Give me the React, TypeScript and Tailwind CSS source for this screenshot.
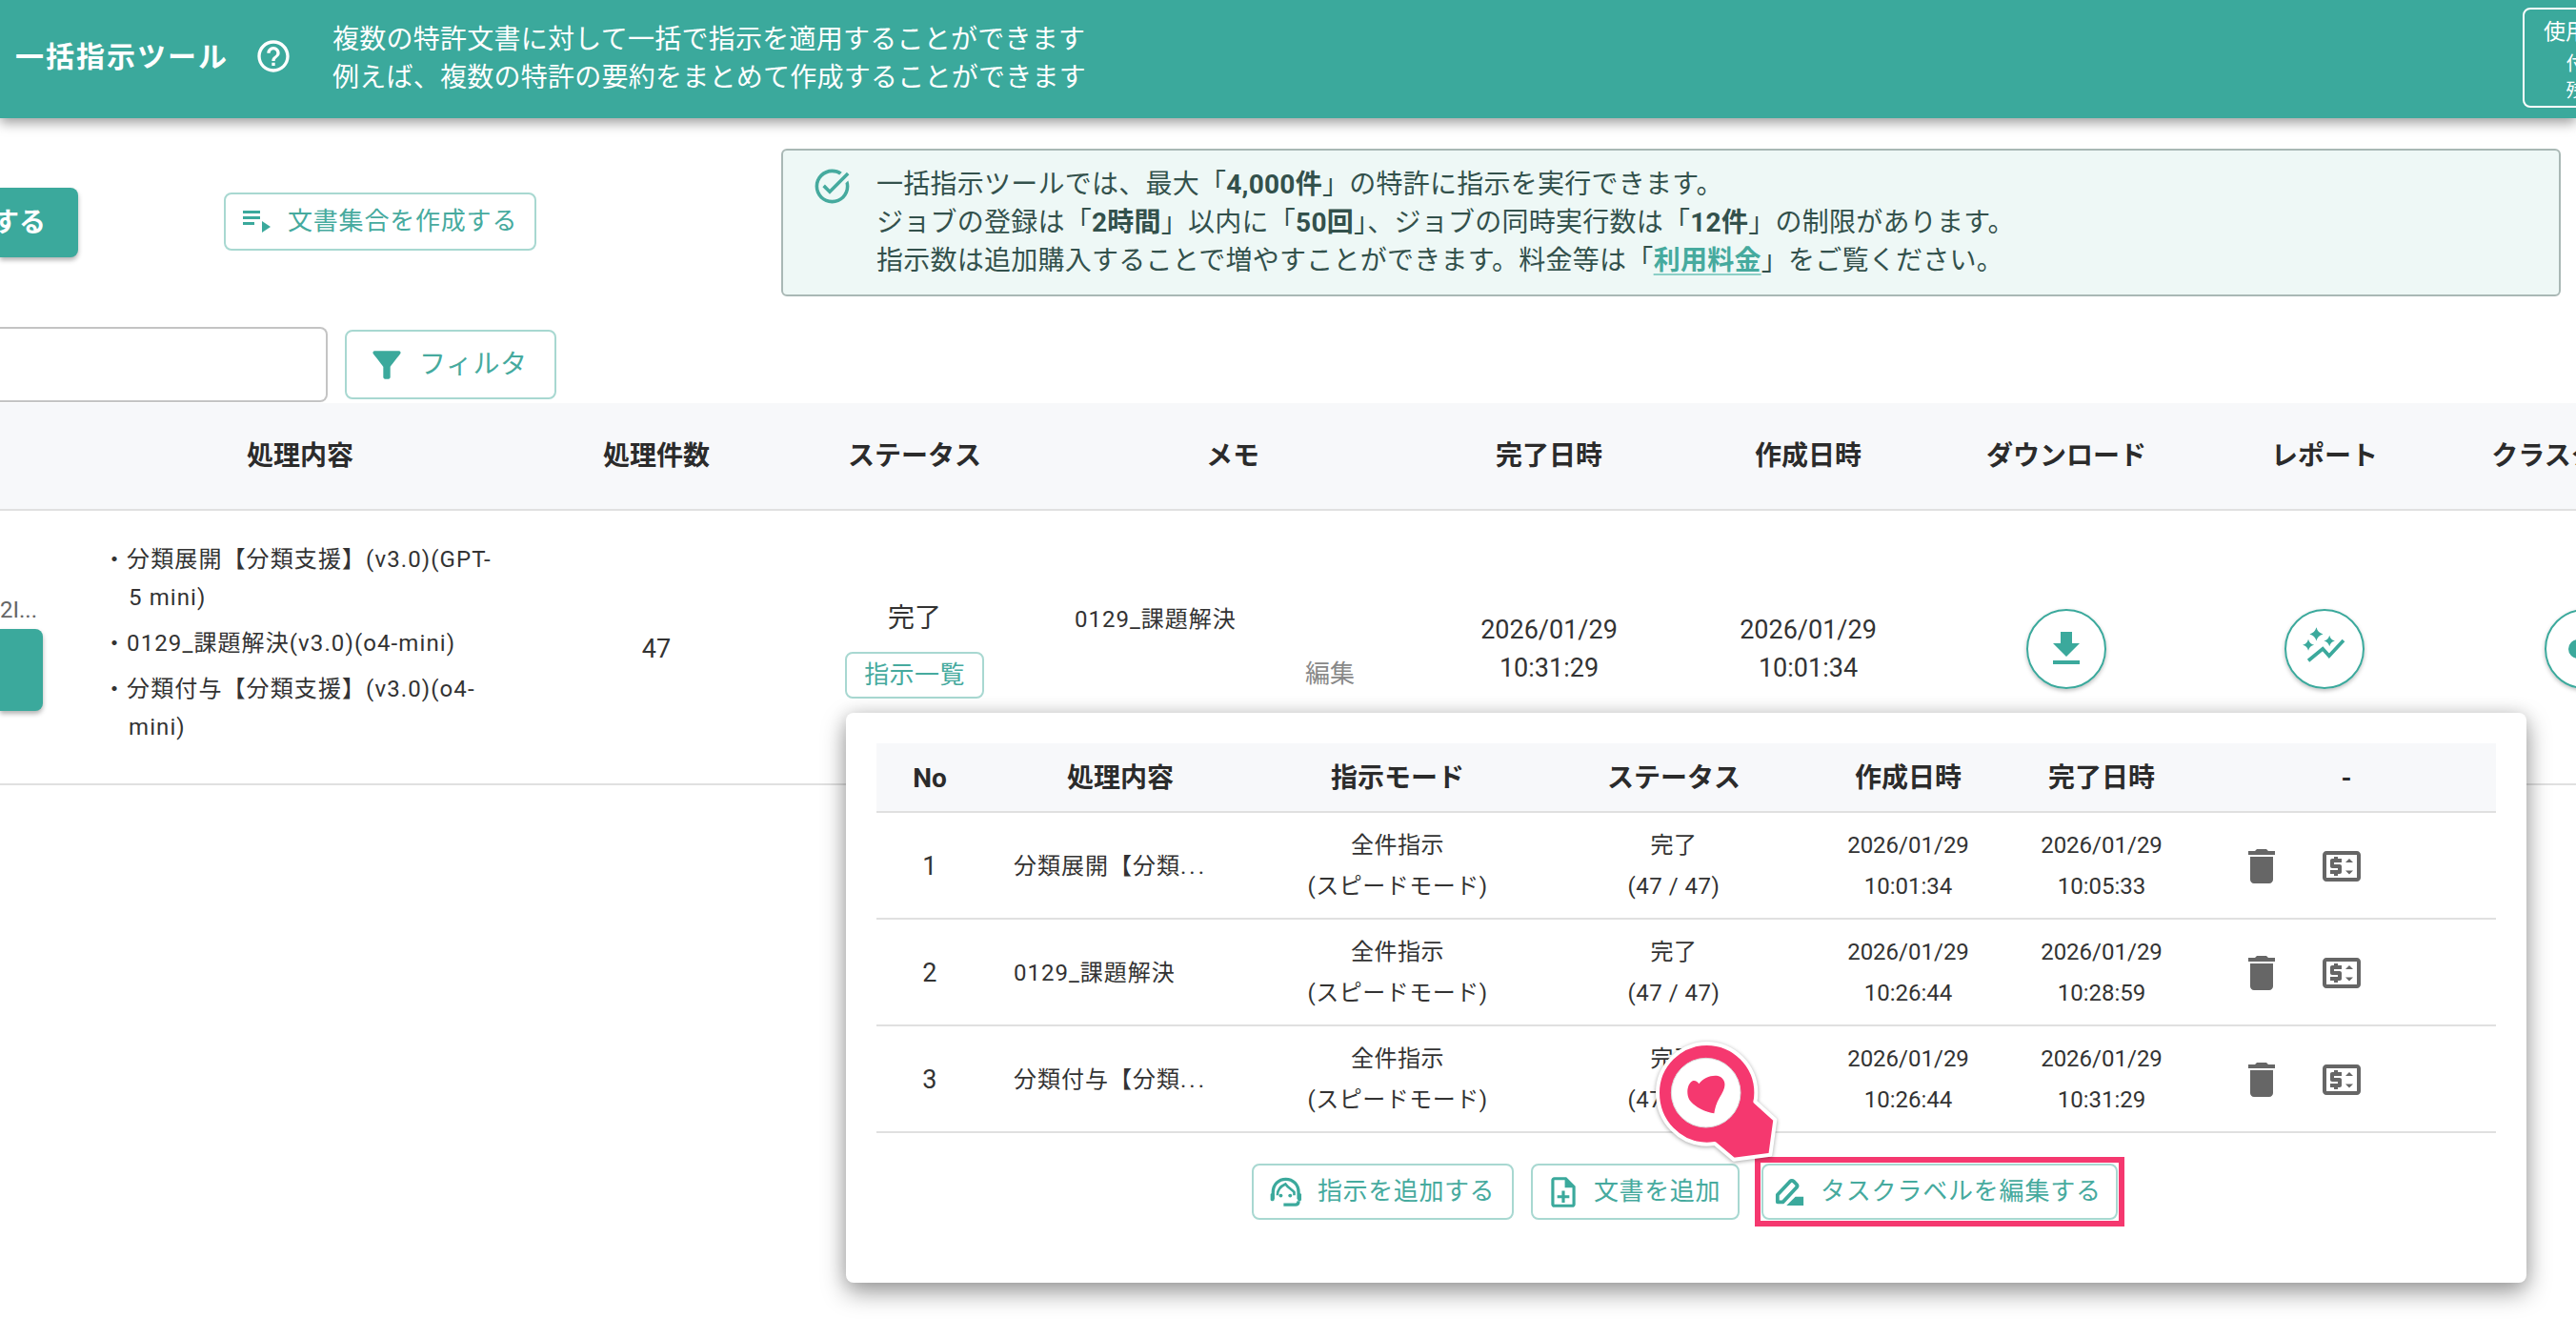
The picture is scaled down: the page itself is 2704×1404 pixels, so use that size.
import React from "react";
import { MdHelpOutline, MdFilterAlt, MdOutlineTaskAlt, MdFileDownload, MdDelete, MdOutlinePriceChange, MdOutlineNoteAdd } from "react-icons/md";

const mainCols = "grid-cols-[94px_442px_306px_236px_432px_232px_312px_230px_312px_234px]";
const subCols = "grid-cols-[112px_288px_294px_286px_206px_200px_314px]";

function PlaylistIcon() {
  return (
    <svg width="30" height="24" viewBox="0 0 30 24" className="shrink-0 text-[#3ba99c]" fill="currentColor">
      <rect x="0" y="0" width="18" height="3" />
      <rect x="0" y="6" width="18" height="3" />
      <rect x="0" y="12" width="12" height="3" />
      <polygon points="20,11 29,17 20,23" />
    </svg>
  );
}

function HeadsetIcon() {
  return (
    <svg width="34" height="34" viewBox="36 24 104 104" className="shrink-0" fill="none" stroke="#3ba99c">
      <path d="M46 98 V76 C46 52 64 34 87 34 C110 34 128 52 128 76 V98" strokeWidth="10" />
      <path d="M60 86 C60 66 72 56 86 50 C94 62 108 68 114 76 V86" strokeWidth="8" />
      <circle cx="71" cy="87" r="6" fill="#3ba99c" stroke="none" />
      <circle cx="101" cy="87" r="6" fill="#3ba99c" stroke="none" />
      <path d="M80 116 H118 Q128 116 128 104" strokeWidth="10" />
      <rect x="38" y="80" width="12" height="24" rx="4" fill="#3ba99c" stroke="none" />
      <rect x="125" y="80" width="12" height="24" rx="4" fill="#3ba99c" stroke="none" />
    </svg>
  );
}

function PenIcon() {
  return (
    <svg width="32" height="32" viewBox="0 0 34 34" className="shrink-0" fill="none" stroke="#3ba99c">
      <path d="M3 28 V20 L17 5 Q19 3 21 5 L24 8 Q26 10 24 12 L9 28 Z" strokeWidth="4" strokeLinejoin="round" />
      <polygon points="13,32 32,32 32,22 23,22" fill="#3ba99c" stroke="none" />
    </svg>
  );
}

function SparkleIcon() {
  const star = (x: number, y: number, r: number) => `M${x} ${y - r} Q${x + r * 0.2} ${y - r * 0.2} ${x + r} ${y} Q${x + r * 0.2} ${y + r * 0.2} ${x} ${y + r} Q${x - r * 0.2} ${y + r * 0.2} ${x - r} ${y} Q${x - r * 0.2} ${y - r * 0.2} ${x} ${y - r}Z`;
  return (
    <svg width="47" height="47" viewBox="57 85 140 140" fill="#3ba99c">
      <path d={star(100, 110, 21)} />
      <path d={star(141, 131, 17)} />
      <path d={star(75, 144, 18)} />
      <path d="M75 193 L120 156 L140 178 L185 130" fill="none" stroke="#3ba99c" strokeWidth="11" />
    </svg>
  );
}

function Pin() {
  return (
    <svg className="absolute left-[1720px] top-[1080px] drop-shadow-[0_1px_2px_rgba(0,0,0,0.35)]" width="170" height="150" viewBox="0 0 510 450">
      <path
        d="M215 45 C300 45 370 115 370 200 C370 210 369 220 367 228 L430 285 L415 395 L300 410 L240 360 C232 361 224 362 215 362 C130 362 60 290 60 200 C60 115 130 45 215 45Z"
        fill="#f5386f"
        stroke="#ffffff"
        strokeWidth="12"
        strokeLinejoin="round"
      />
      <circle cx="212" cy="200" r="109" fill="#ffffff" stroke="#d9d9d9" strokeWidth="3" />
      <path
        d="M190 172 C205 150 240 140 258 150 C280 165 272 190 255 215 C245 232 240 250 238 265 C215 262 175 245 160 222 C148 200 155 170 170 163 C178 160 186 165 190 172Z"
        fill="#f5386f"
      />
    </svg>
  );
}

const subRows = [
  { no: "1", name: "分類展開【分類", dots: true, created: "10:01:34", done: "10:05:33" },
  { no: "2", name: "0129_課題解決", dots: false, created: "10:26:44", done: "10:28:59" },
  { no: "3", name: "分類付与【分類", dots: true, created: "10:26:44", done: "10:31:29" },
];

function Popup() {
  return (
    <div className="absolute left-[888px] top-[748px] w-[1764px] h-[598px] rounded-lg bg-white px-8 pt-8 shadow-[0_10px_26px_rgba(0,0,0,0.38),0_0_18px_rgba(0,0,0,0.12)]">
      <div className={`grid ${subCols} h-[73px] items-center border-b-2 border-[#e0e0e0] bg-[#f7f8fa] pt-[2px] text-center text-[28px] font-bold text-[#2b2b2b]`}>
        <div>No</div>
        <div>処理内容</div>
        <div>指示モード</div>
        <div>ステータス</div>
        <div>作成日時</div>
        <div>完了日時</div>
        <div>-</div>
      </div>
      {subRows.map((r) => (
        <div key={r.no} className={`grid ${subCols} h-[112px] items-center border-b-2 border-[#e0e0e0] pt-[2px] text-center text-[24px] leading-[43px] tracking-[0.5px] text-[#333333]`}>
          <div className="text-[27px]">{r.no}</div>
          <div className="whitespace-nowrap pl-8 text-left tracking-[1px]">
            {r.name}
            {r.dots && <span className="tracking-[3px]">...</span>}
          </div>
          <div>全件指示<br />(スピードモード)</div>
          <div>完了<br />(47 / 47)</div>
          <div className="tracking-[0px]">2026/01/29<br />{r.created}</div>
          <div className="tracking-[0px]">2026/01/29<br />{r.done}</div>
          <div className="flex items-center gap-9 pl-11 text-[#666666]">
            <MdDelete size={48} />
            <MdOutlinePriceChange size={48} />
          </div>
        </div>
      ))}
      <div className="mt-8 flex items-start pl-[394px] text-[26px] tracking-[0.6px] text-[#46aa9e]">
        <div className="flex h-[59px] w-[275px] items-center gap-[16px] rounded-lg border-2 border-[#a8d8d1] pl-[17px]">
          <HeadsetIcon />
          <span>指示を追加する</span>
        </div>
        <div className="ml-[18px] flex h-[59px] w-[219px] items-center gap-[13px] rounded-lg border-2 border-[#a8d8d1] pl-[13px]">
          <MdOutlineNoteAdd size={38} className="shrink-0 text-[#3ba99c]" />
          <span>文書を追加</span>
        </div>
        <div className="relative ml-[23px] flex h-[59px] w-[374px] items-center gap-[16px] rounded-lg border-2 border-[#a8d8d1] pl-[12px] tracking-[0.8px]">
          <PenIcon />
          <span>タスクラベルを編集する</span>
          <div className="absolute -inset-x-[9px] -inset-y-[9px] border-[6px] border-[#f5386f]" />
        </div>
      </div>
    </div>
  );
}

export default function App() {
  return (
    <div className="relative h-[1404px] w-[2704px] overflow-hidden bg-white font-['Roboto','Noto_Sans_CJK_JP',sans-serif]">
      <header className="relative z-10 flex h-[124px] items-center bg-[#3ba99c] text-white shadow-[0_5px_12px_rgba(0,0,0,0.38)]">
        <h1 className="w-[267px] shrink-0 pb-[6px] pl-4 text-[30px] font-bold tracking-[2px]">一括指示ツール</h1>
        <MdHelpOutline size={40} className="mb-[6px] shrink-0" />
        <p className="ml-[42px] w-[2299px] shrink-0 text-[28px] leading-[40px] tracking-[0.25px]">
          複数の特許文書に対して一括で指示を適用することができます<br />
          例えば、複数の特許の要約をまとめて作成することができます
        </p>
        <div className="flex h-[105px] w-[136px] shrink-0 -translate-y-[2px] flex-col items-center justify-center rounded-lg border-2 border-white pt-[4px] text-[20px] leading-[28px]">
          <div className="text-[23px] leading-[38px]">使用状況</div>
          <div>付与:</div>
          <div>残り:</div>
        </div>
      </header>

      <div className="flex h-[219px] items-start pt-8">
        <div className="mt-[41px] flex h-[73px] w-[82px] shrink-0 items-center justify-end rounded-r-lg bg-[#3ba99c] pr-[34px] text-[28px] font-bold text-white shadow-[0_3px_5px_rgba(0,0,0,0.3)]">
          <span className="whitespace-nowrap">する</span>
        </div>
        <div className="ml-[153px] mt-[46px] flex h-[61px] w-[328px] shrink-0 items-center gap-[17px] rounded-lg border-2 border-[#a8d8d1] pl-[18px] text-[26px] tracking-[0.8px] text-[#46aa9e]">
          <PlaylistIcon />
          <span className="whitespace-nowrap">文書集合を作成する</span>
        </div>
        <div className="ml-[257px] flex h-[155px] w-[1868px] shrink-0 rounded-md border-2 border-[#a9b8b5] bg-[#eef8f6] pl-[30px] pt-[16px] text-[28px] leading-[40px] tracking-[0.25px] text-[#33514c]">
          <MdOutlineTaskAlt size={43} className="shrink-0 text-[#46aa9e]" />
          <div className="ml-[25px]">
            一括指示ツールでは、最大「<b>4,000件</b>」の特許に指示を実行できます。<br />
            ジョブの登録は「<b>2時間</b>」以内に「<b>50回</b>」、ジョブの同時実行数は「<b>12件</b>」の制限があります。<br />
            指示数は追加購入することで増やすことができます。料金等は「<b className="text-[#46aa9e] underline decoration-[#8ccfc6] underline-offset-4">利用料金</b>」をご覧ください。
          </div>
        </div>
      </div>

      <div className="flex h-[80px] items-start">
        <div className="h-[79px] w-[344px] shrink-0 rounded-r-lg border-2 border-l-0 border-[#c4c4c4]" />
        <div className="ml-[18px] mt-[3px] flex h-[73px] w-[222px] shrink-0 items-center gap-[12px] rounded-lg border-2 border-[#a8d8d1] pl-[20px] text-[28px] tracking-[0.5px] text-[#46aa9e]">
          <MdFilterAlt size={44} className="shrink-0 text-[#3ba99c]" />
          <span className="whitespace-nowrap">フィルタ</span>
        </div>
      </div>

      <div className={`grid w-[2830px] ${mainCols} h-[113px] items-center border-b-2 border-[#e0e0e0] bg-[#f7f8fa] text-center text-[28px] font-bold text-[#2b2b2b]`}>
        <div />
        <div>処理内容</div>
        <div>処理件数</div>
        <div>ステータス</div>
        <div>メモ</div>
        <div>完了日時</div>
        <div>作成日時</div>
        <div>ダウンロード</div>
        <div>レポート</div>
        <div>クラスタリング</div>
      </div>

      <div className={`grid w-[2830px] ${mainCols} h-[288px] items-center border-b-2 border-[#e0e0e0] pt-[3px] text-center text-[27px] leading-[40px] text-[#333333]`}>
        <div className="self-start pt-[81px] text-left text-[24px] text-[#666666]">
          <div>2I...</div>
          <div className="mt-0 h-[86px] w-[45px] rounded-r-lg bg-[#3ba99c] shadow-[0_3px_5px_rgba(0,0,0,0.3)]" />
        </div>
        <div className="whitespace-nowrap pb-[11px] pl-[14px] text-left text-[24px] leading-[40px] tracking-[1.1px]">
          <div className="mb-2 pl-[27px] -indent-[27px]">・分類展開【分類支援】(v3.0)(GPT-<br />5 mini)</div>
          <div className="mb-2 pl-[27px] -indent-[27px]">・0129_課題解決(v3.0)(o4-mini)</div>
          <div className="pl-[27px] -indent-[27px]">・分類付与【分類支援】(v3.0)(o4-<br />mini)</div>
        </div>
        <div className="text-[27px]">47</div>
        <div className="flex flex-col items-center text-[28px]">
          <div>完了</div>
          <div className="mt-[15px] flex h-[49px] w-[146px] items-center justify-center rounded-lg border-2 border-[#a8d8d1] text-[26px] tracking-[0.4px] text-[#46aa9e]">指示一覧</div>
        </div>
        <div className="flex flex-col items-start pb-[3px] pl-[50px] text-left">
          <div className="text-[24px] leading-[32px] tracking-[1px]">0129_課題解決</div>
          <div className="ml-[242px] mt-[23px] text-[26px] leading-[36px] text-[#888888]">編集</div>
        </div>
        <div>2026/01/29<br />10:31:29</div>
        <div>2026/01/29<br />10:01:34</div>
        <div className="flex justify-center">
          <div className="flex h-[84px] w-[84px] items-center justify-center rounded-full border-2 border-[#3ba99c] text-[#3ba99c] shadow-[0_2px_4px_rgba(0,0,0,0.25)]">
            <MdFileDownload size={48} />
          </div>
        </div>
        <div className="flex justify-center">
          <div className="flex h-[84px] w-[84px] items-center justify-center rounded-full border-2 border-[#3ba99c] shadow-[0_2px_4px_rgba(0,0,0,0.25)]">
            <SparkleIcon />
          </div>
        </div>
        <div className="flex justify-center">
          <div className="flex h-[84px] w-[84px] items-center rounded-full border-2 border-[#3ba99c] pl-[23px] shadow-[0_2px_4px_rgba(0,0,0,0.25)]">
            <span className="h-5 w-5 rounded-full bg-[#3ba99c]" />
          </div>
        </div>
      </div>

      <Popup />
      <Pin />
    </div>
  );
}
